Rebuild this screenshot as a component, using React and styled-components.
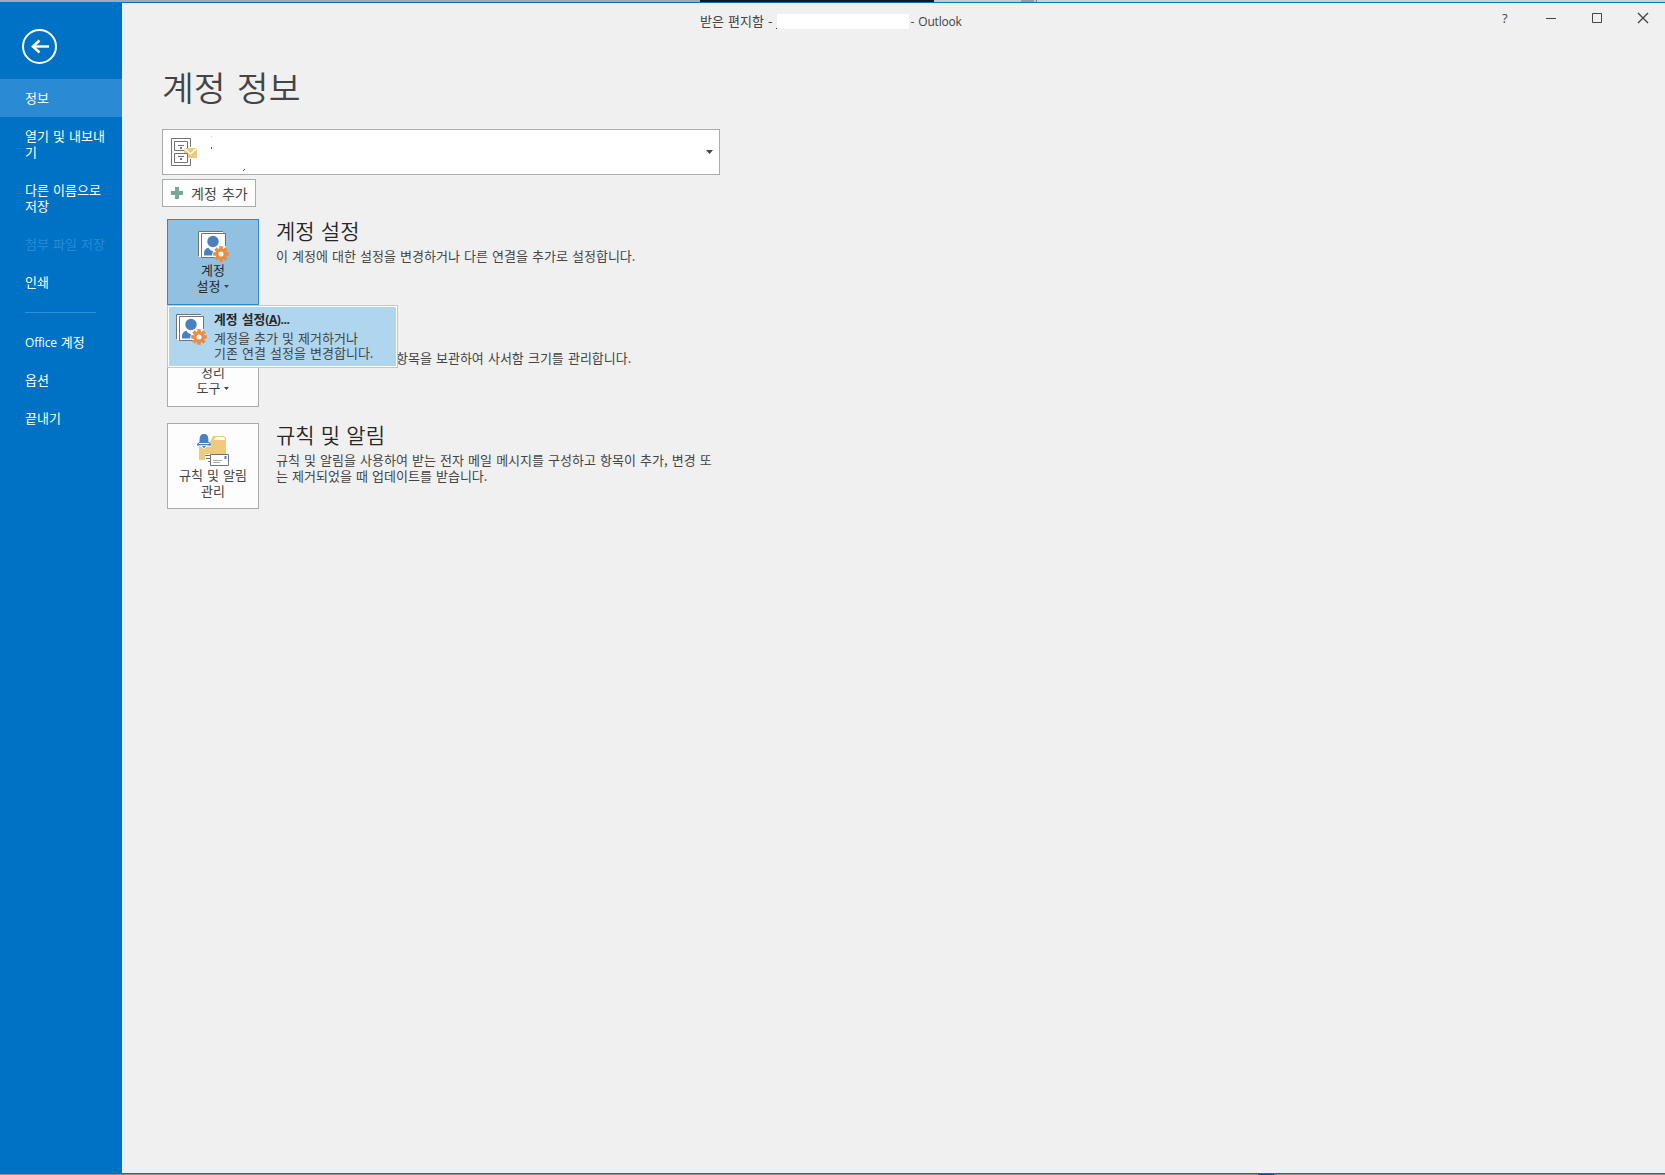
import React from 'react'
import styled, { createGlobalStyle, css } from 'styled-components'

const GlobalStyle = createGlobalStyle`
    * {
        box-sizing: border-box;
    }
    body {
        margin: 0;
        overflow: hidden;
        background: #f0f0f0;
        font-family: "Noto Sans CJK KR", "Noto Sans", sans-serif;
        font-size: 13px;
        line-height: 16px;
        word-spacing: 1.2px;
        color: #444;
    }
`

const Window = styled.div`
    display: flex;
    flex-direction: column;
    width: 1665px;
    height: 1175px;
`

const Strip = styled.div`
    display: flex;
    flex: none;
    height: ${props => props.$height}px;
    background: ${props => props.$color};
`

const StripPart = styled.div`
    width: ${props => props.$width}px;
    background: ${props => props.$color};
`

const Frame = styled.div`
    display: flex;
    flex: 1;
    border-top: 1px solid #0072c6;
    border-bottom: 1px solid #0072c6;
`

const Sidebar = styled.nav`
    width: 122px;
    flex: none;
    background: #0072c6;
    color: #fff;
`

const BackButton = styled.div`
    height: 76px;
    padding: 25px 0 0 21px;

    svg {
        display: block;
    }
`

const NavItem = styled.div`
    padding: 11px 0 11px 25px;
    white-space: pre-line;
    background: ${props => (props.$active ? '#2a8ad4' : 'transparent')};
    color: ${props => (props.$disabled ? '#2a8ad4' : '#fff')};
`

const Divider = styled.div`
    width: 71px;
    height: 1px;
    margin: 11px 0 10px 25px;
    background: #3390d6;
`

const Latin = styled.span`
    font-family: "Open Sans", "Noto Sans", sans-serif;
    font-size: 12px;
    line-height: 1;
    letter-spacing: ${props => (props.$tight ? '-0.4px' : '-0.2px')};
`

const Main = styled.main`
    flex: 1;
    display: flex;
    flex-direction: column;
`

const TitleBar = styled.header`
    display: flex;
    height: 56px;
    padding-left: 578px;
`

const WindowTitle = styled.div`
    display: flex;
    align-items: center;
    width: 802px;
    height: 16px;
    margin-top: 10px;
    white-space: pre;

    ${Latin} {
        padding-top: 1px;
    }
`

const Redacted = styled.div`
    position: relative;
    width: 132px;
    height: 15px;
    margin: 0 2px 0 4px;
    background: #fff;

    &::before {
        content: '';
        position: absolute;
        left: -1px;
        bottom: 0;
        width: 1px;
        height: 1px;
        background: #444;
    }
`

const WindowControls = styled.div`
    display: flex;
    height: 30px;

    svg {
        display: block;
    }
`

const HelpMark = styled.div`
    width: 10px;
    padding-top: 7px;
    font-family: "Open Sans", sans-serif;
    font-size: 13px;
`

const Content = styled.div`
    padding-left: 40px;
`

const PageTitle = styled.h1`
    height: 70px;
    margin: 0;
    padding-top: 5px;
    font-size: 34.6px;
    font-weight: 350;
    line-height: 44px;
    word-spacing: 3.5px;
`

const AccountSelect = styled.div`
    display: flex;
    align-items: center;
    justify-content: space-between;
    width: 558px;
    height: 46px;
    padding: 0 6px 0 8px;
    border: 1px solid #ababab;
    background: #fff;
`

const AddButton = styled.div`
    display: flex;
    align-items: center;
    width: 94px;
    height: 28px;
    margin-top: 4px;
    padding-left: 8px;
    gap: 8px;
    border: 1px solid #ababab;
    background: #fdfdfd;
    font-size: 14px;
    word-spacing: 2px;
`

const Sections = styled.div`
    display: flex;
    flex-direction: column;
    gap: 16px;
    padding: 12px 0 0 5px;
`

const Section = styled.section`
    display: flex;
    position: relative;
    gap: 17px;
    height: 86px;
`

const TileButton = styled.div`
    display: flex;
    flex-direction: column;
    align-items: center;
    width: 92px;
    height: 86px;
    padding-top: 9px;
    border: 1px solid #ababab;
    background: #fdfdfd;
    text-align: center;

    ${props => props.$open && css`
        border-color: #2a8ad4;
        background: #92c0e0;
        color: #262626;
    `}

    svg {
        display: block;
        flex: none;
    }
`

const TileLabel = styled.div`
    display: flex;
    align-items: center;
    height: 16px;
    gap: 4px;
`

const TileIcon = styled.div`
    height: ${props => props.$height || 33}px;
    padding-top: ${props => props.$drop || 0}px;
`

const SectionText = styled.div`
    width: 445px;
    padding-top: ${props => (props.$covered ? '24px' : 0)};
    padding-left: ${props => (props.$covered ? '120px' : 0)};
`

const SectionTitle = styled.h2`
    height: 24px;
    margin: 0;
    font-size: 21px;
    font-weight: 350;
    line-height: 22px;
    word-spacing: 1.5px;
    color: #262626;
`

const Description = styled.p`
    margin: 5px 0 0;
    white-space: pre-line;
`

const Menu = styled.div`
    position: absolute;
    z-index: 1;
    top: 86px;
    left: 0;
    display: flex;
    width: 231px;
    height: 63px;
    padding: 7px 0 0 7px;
    gap: 7px;
    border: 1px solid #c6c6c6;
    background: #b0d5ef;
    box-shadow: inset 0 0 0 1px #fff;
`

const MenuTitle = styled.div`
    height: 19px;
    margin-top: -2px;
    font-weight: 700;
    font-size: 12.8px;
    color: #262626;
`

const MenuText = styled.div`
    line-height: 15px;
    white-space: pre-line;
`

const PersonIcon = () => (
    <svg width="32" height="32" viewBox="0 0 32 32">
        <path d="M1 27V1h25v26z" fill="#fff" />
        <path d="M1.500 26.500V1.500H26" fill="none" stroke="#737373" />
        <path d="M4.500 3.500h24v24h-24z" fill="#fff" stroke="#737373" />
        <circle cx="16" cy="11.500" r="5.700" fill="#4a81bd" />
        <path d="M7 25.500V23c0-3 2-5 4.500-5.300 1 2.300 3 3.300 4.500 3.300l-1 4.500z" fill="#4a81bd" />
        <path d="M17 18.500l4-2.500h8v12H18l-2-4z" fill="#fff" opacity="0.85" />
        <g transform="translate(24 24)">
            <g fill="#e98d43">
                {[0, 45, 90, 135].map(angle => (
                    <rect key={angle} x="-1.800" y="-7.800" width="3.600" height="15.600" transform={`rotate(${angle})`} />
                ))}
                <circle r="5.600" />
            </g>
            <circle r="2.500" fill="#fff" />
        </g>
    </svg>
)

const RulesIcon = () => (
    <svg width="34" height="34" viewBox="0 0 34 34">
        <path d="M3 27V9h11l3-6h11l2 2v22z" fill="#f0c97f" />
        <path d="M18 7l2-3h8l1 3z" fill="#fff" />
        <path d="M0 13.500L3 10c1-7 1-9 5-9s4 2 5 9l3 3.500z" fill="#fdfdfd" />
        <path d="M3.500 9c0-6 1-8 4.500-8s4.500 2 4.500 8l2.500 2v1.500H1V11z" fill="#4a81bd" />
        <path d="M3 10.500h10" stroke="#fff" />
        <path d="M4 12.500h8l-4 4z" fill="#fff" />
        <path d="M6 13h4l-2 2.500z" fill="#4a81bd" />
        <path d="M9 21h5v11H9z" fill="#fff" />
        <path d="M9 22.500h5M10 25.500h4M12 28.500h2" stroke="#737373" />
        <path d="M14.500 21.500h18v11h-18z" fill="#fff" stroke="#737373" />
        <path d="M17 27.500h9M17 29.500h7" stroke="#ababab" />
        <path d="M28.500 23h2v3h-2z" fill="#4a81bd" />
    </svg>
)

const CabinetIcon = () => (
    <svg width="90" height="44" viewBox="0 0 90 44">
        <g transform="translate(0 8)">
            <g fill="none" stroke="#737373">
                <path d="M19.500 9V.5H.5v27h19V21" />
                <path d="M3.500 3.500h13v9h-13zM3.500 15.500h13v9h-13z" />
                <path d="M7 7.500h6M7 18.500h6" />
            </g>
            <path d="M9 9h2v2H9zM9 20h2v2H9z" fill="#737373" />
            <path d="M13 10h13v10h-9v-5h-4z" fill="#f0c97f" />
            <path d="M13.500 10.500l6 5.500 6-5.500" fill="none" stroke="#fff" strokeWidth="1.300" />
        </g>
        <path d="M40 6h1v1h-1z" fill="#ccc" />
        <path d="M40 17h1v2h-1zM73 39h1v1h-1zM72 40h1v1h-1z" fill="#555" />
    </svg>
)

const BackIcon = () => (
    <svg width="37" height="37" viewBox="0 0 37 37" fill="none" stroke="#fff">
        <circle cx="18.500" cy="18.500" r="16.500" strokeWidth="2" />
        <path d="M28 18.500H12" strokeWidth="2.400" />
        <path d="M18.500 12.500l-6.500 6 6.500 6" strokeWidth="2.600" />
    </svg>
)

const PlusIcon = () => (
    <svg width="12" height="12" viewBox="0 0 12 12">
        <path d="M4 0h4v4h4v4H8v4H4V8H0V4h4z" fill="#76a797" />
    </svg>
)

const Caret = ({ width = 5, height = 3 }) => (
    <svg width={width} height={height} viewBox="0 0 6 3" preserveAspectRatio="none">
        <path d="M0 0h6L3 3z" fill="#444" />
    </svg>
)

const ControlIcons = () => (
    <svg width="140" height="30" viewBox="0 0 140 30" fill="none" stroke="#444">
        <path d="M34 15.500h10" />
        <path d="M80.500 10.500h9v9h-9z" />
        <path d="M126 10l10 10M136 10l-10 10" strokeWidth="1.400" />
    </svg>
)

const navItems = [
    { label: '정보', active: true },
    { label: '열기 및 내보내\n기' },
    { label: '다른 이름으로\n저장' },
    { label: '첨부 파일 저장', disabled: true },
    { label: '인쇄' },
]

function App() {
    return (
        <>
            <GlobalStyle />
            <Window>
                <Strip $height={2} $color="#d0d0d0">
                    <StripPart $width={700} $color="#a6a8ad" />
                    <StripPart $width={234} $color="#16181c" />
                    <StripPart $width={87} $color="#c8c8cb" />
                    <StripPart $width={13} $color="#9a9a9e" />
                    <StripPart $width={2} $color="#c8c8cb" />
                    <StripPart $width={1} $color="#808084" />
                </Strip>
                <Frame>
                    <Sidebar>
                        <BackButton>
                            <BackIcon />
                        </BackButton>
                        {navItems.map(item => (
                            <NavItem key={item.label} $active={item.active} $disabled={item.disabled}>
                                {item.label}
                            </NavItem>
                        ))}
                        <Divider />
                        <NavItem><Latin>Office</Latin> 계정</NavItem>
                        <NavItem>옵션</NavItem>
                        <NavItem>끝내기</NavItem>
                    </Sidebar>
                    <Main>
                        <TitleBar>
                            <WindowTitle>
                                받은 편지함 -
                                <Redacted />
                                <Latin>- Outlook</Latin>
                            </WindowTitle>
                            <WindowControls>
                                <HelpMark>?</HelpMark>
                                <ControlIcons />
                            </WindowControls>
                        </TitleBar>
                        <Content>
                            <PageTitle>계정 정보</PageTitle>
                            <AccountSelect>
                                <CabinetIcon />
                                <Caret width={7} height={4} />
                            </AccountSelect>
                            <AddButton>
                                <PlusIcon />
                                계정 추가
                            </AddButton>
                            <Sections>
                                <Section>
                                    <TileButton $open>
                                        <TileIcon $drop={1}><PersonIcon /></TileIcon>
                                        <TileLabel>계정</TileLabel>
                                        <TileLabel>설정 <Caret /></TileLabel>
                                    </TileButton>
                                    <SectionText>
                                        <SectionTitle>계정 설정</SectionTitle>
                                        <Description>이 계정에 대한 설정을 변경하거나 다른 연결을 추가로 설정합니다.</Description>
                                    </SectionText>
                                    <Menu>
                                        <PersonIcon />
                                        <div>
                                            <MenuTitle>계정 설정<Latin $tight>(<u>A</u>)...</Latin></MenuTitle>
                                            <MenuText>{'계정을 추가 및 제거하거나\n기존 연결 설정을 변경합니다.'}</MenuText>
                                        </div>
                                    </Menu>
                                </Section>
                                <Section>
                                    <TileButton>
                                        <TileIcon />
                                        <TileLabel>정리</TileLabel>
                                        <TileLabel>도구 <Caret /></TileLabel>
                                    </TileButton>
                                    <SectionText $covered>
                                        <Description>항목을 보관하여 사서함 크기를 관리합니다.</Description>
                                    </SectionText>
                                </Section>
                                <Section>
                                    <TileButton>
                                        <TileIcon $height={34}><RulesIcon /></TileIcon>
                                        <TileLabel>규칙 및 알림</TileLabel>
                                        <TileLabel>관리</TileLabel>
                                    </TileButton>
                                    <SectionText>
                                        <SectionTitle>규칙 및 알림</SectionTitle>
                                        <Description>
                                            {'규칙 및 알림을 사용하여 받는 전자 메일 메시지를 구성하고 항목이 추가, 변경 또\n는 제거되었을 때 업데이트를 받습니다.'}
                                        </Description>
                                    </SectionText>
                                </Section>
                            </Sections>
                        </Content>
                    </Main>
                </Frame>
                <Strip $height={1} $color="#8c9096">
                    <StripPart $width={1258} $color="#8c9096" />
                    <StripPart $width={16} $color="#0050a0" />
                </Strip>
            </Window>
        </>
    )
}

export default App
